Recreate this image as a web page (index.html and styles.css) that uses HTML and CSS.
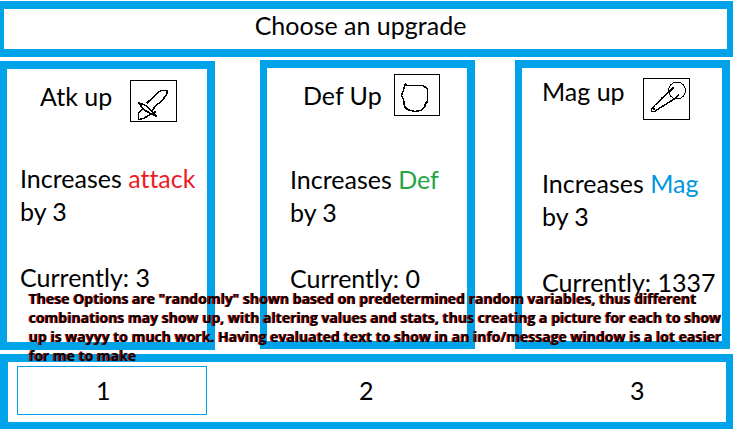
FILE: index.html
```html
<!DOCTYPE html>
<html lang="en">

<head>
    <meta charset="UTF-8">
    <meta name="viewport" content="width=device-width, initial-scale=1.0">
    <title>Choose an upgrade</title>
    <link rel="stylesheet" href="styles.css">
</head>

<body>
    <header class="title-window">
        <h1>Choose an upgrade</h1>
    </header>

    <main class="cards">
        <section class="card card-attack">
            <div class="card-head">
                <h2>Atk up</h2>
                <svg class="icon" viewBox="0 0 47 42" width="47" height="42">
                    <rect x="0.5" y="0.5" width="46" height="41" />
                    <path d="M8.5 22.5L15.5 25.5L21.5 30.5L26.5 36.5L20.5 33.5L13.5 29.5L8.5 22.5M16.5 23.5L19.5 20.5L23.5 17.5L27.5 12.5L31.5 10.5L37.5 10.5L36.5 14.5L31.5 21.5L25.5 25.5L22.5 30.5M12.5 28.5L8.5 33.5L8.5 39.5L13.5 38.5L18.5 35.5L23.5 33.5L25.5 31.5M22.5 30.5L23.5 35.5" />
                </svg>
            </div>
            <p>Increases <span class="attack">attack</span><br>by 3</p>
            <p>Currently: 3</p>
        </section>

        <section class="card card-defense">
            <div class="card-head">
                <h2>Def Up</h2>
                <svg class="icon" viewBox="0 0 46 42" width="46" height="42">
                    <rect x="0.5" y="0.5" width="45" height="41" />
                    <path d="M11.5 10.5L12.5 11.5L28.5 11.5L33.5 14.5L33.5 27.5L31.5 29.5L30.5 33.5L26.5 36.5L20.5 37.5L13.5 35.5L10.5 32.5L9.5 25.5L7.5 21.5L9.5 16.5L10.5 11.5Z" />
                </svg>
            </div>
            <p>Increases <span class="defense">Def</span><br>by 3</p>
            <p>Currently: 0</p>
        </section>

        <section class="card card-magic">
            <div class="card-head">
                <h2>Mag up</h2>
                <svg class="icon" viewBox="0 0 47 42" width="47" height="42">
                    <rect x="0.5" y="0.5" width="46" height="41" />
                    <circle cx="34" cy="12.5" r="8.5" />
                    <path d="M30.5 9.5L25.5 14.5L19.5 19.5L12.5 27.5L8.5 30.5L8.5 33.5L11.5 33.5L14.5 31.5L22.5 26.5L30.5 21.5L36.5 16.5M9.5 30.5L12.5 31.5" />
                </svg>
            </div>
            <p>Increases <span class="magic">Mag</span><br>by 3</p>
            <p>Currently: 1337</p>
        </section>
    </main>

    <p class="note">
        These Options are "randomly" shown based on predetermined random variables, thus different<br>
        combinations may show up, with altering values and stats, thus creating a picture for each to show<br>
        up is wayyy to much work. Having evaluated text to show in an info/message window is a lot easier<br>
        for me to make
    </p>

    <nav class="choices">
        <button type="button" class="selected">1</button>
        <button type="button">2</button>
        <button type="button">3</button>
    </nav>
</body>

</html>
```
FILE: styles.css
```css
* {
    margin: 0;
    padding: 0;
    box-sizing: border-box;
}

body {
    position: relative;
    padding-top: 1px;
    background: white;
    color: black;
    font-family: Lato, Carlito, Calibri, sans-serif;
    font-size: 25px;
    font-variant-ligatures: none;
    line-height: 33px;
}

h1,
h2 {
    font-size: 25px;
    font-weight: normal;
}

/* Blue window frames */
.title-window,
.card,
.choices {
    border: 8px solid #00a2e8;
}

.title-window {
    height: 56px;
    padding-right: 10px;
    border-right-width: 6px;
    border-left-width: 4px;
    text-align: center;
}

.cards {
    display: grid;
    grid-template-columns: 220fr 215fr 215fr;
    align-items: start;
    gap: 40px;
    padding: 3px 3px 0 0;
}

.card {
    height: 289px;
    border-left-width: 7px;
    white-space: nowrap;
}

.card-attack {
    margin-top: 1px;
    margin-right: 5px;
    padding: 11px 0 0 13px;
}

.card-defense {
    padding: 6px 0 0 23px;
}

.card-magic {
    padding: 7px 0 0 20px;
}

.card-head {
    display: flex;
    align-items: flex-start;
    justify-content: space-between;
    margin-bottom: 40px;
}

.card-attack .card-head {
    padding: 0 30px 0 20px;
}

.card-defense .card-head {
    align-items: center;
    margin-bottom: 47px;
    padding: 0 27px 0 13px;
}

.card-magic .card-head {
    margin-bottom: 47px;
    padding-right: 32px;
}

.card-magic .icon {
    margin-top: 3px;
}

.card p + p {
    margin-top: 33px;
}

.icon {
    fill: none;
    stroke: black;
    shape-rendering: crispEdges;
}

.icon path {
    stroke-width: 1.5;
}

.attack {
    color: #ed1c24;
}

.defense {
    color: #22a648;
}

.magic {
    color: #0096dc;
}

/* The note runs over the cards and the bottom window */
.note {
    position: absolute;
    top: 289px;
    left: 29px;
    font-family: "Open Sans", Calibri, sans-serif;
    font-size: 14px;
    font-weight: bold;
    line-height: 19px;
    white-space: nowrap;
    text-shadow: -1px 0 #e00000;
}

.choices {
    display: grid;
    grid-template-columns: 190fr 198fr 175fr;
    gap: 73px;
    margin-top: 4px;
    padding: 4px 0 7px 9px;
    border-right-width: 7px;
    border-bottom-width: 7px;
}

.choices button {
    height: 49px;
    padding-left: 78px;
    border: 1px solid transparent;
    background: none;
    color: inherit;
    font: inherit;
    text-align: left;
}

.choices .selected {
    border-color: #00a2e8;
}
```
